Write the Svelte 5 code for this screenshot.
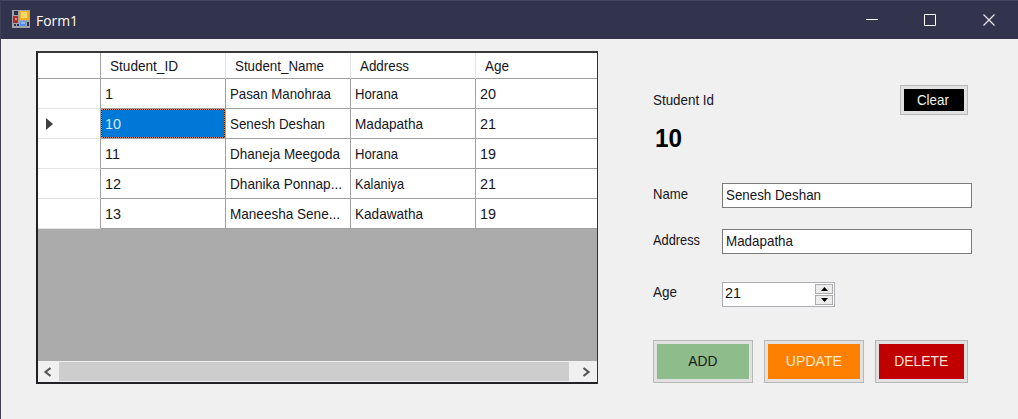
<script>
  const columns = [
    { name: 'Student_ID', w: 68 },
    { name: 'Student_Name', w: 89 },
    { name: 'Address', w: 49 },
    { name: 'Age', w: 24 }
  ];
  const rows = [
    [['1', 8], ['Pasan Manohraa', 101], ['Horana', 43], ['20', 16]],
    [['10', 16], ['Senesh Deshan', 95], ['Madapatha', 68], ['21', 16]],
    [['11', 15], ['Dhaneja Meegoda', 110], ['Horana', 43], ['19', 16]],
    [['12', 16], ['Dhanika Ponnap...', 112], ['Kalaniya', 49], ['21', 16]],
    [['13', 16], ['Maneesha Sene...', 110], ['Kadawatha', 68], ['19', 16]]
  ];
  const current = 1;

  // Condenses a label horizontally to the given width.
  function fit(node, width) {
    node.style.transform = `scaleX(${width / node.getBoundingClientRect().width})`;
  }
</script>

<div class="window">
  <header class="titlebar">
    <svg class="appicon" width="18" height="18" viewBox="0 0 18 18">
      <rect width="18" height="18" fill="#a3a4aa" />
      <rect x="2" y="1" width="4" height="4" fill="#2b2e52" />
      <rect x="1" y="6" width="5" height="7" fill="#b52a24" />
      <rect x="3" y="8" width="2" height="2" fill="#e98678" />
      <rect x="7.5" y="1" width="9.500" height="9" fill="#eeb020" />
      <rect x="9" y="2" width="6" height="6" fill="#fbd765" />
      <rect x="8" y="11.500" width="6" height="4.500" fill="#4d8ff0" />
      <rect x="9" y="12" width="4" height="2" fill="#8bbcff" />
      <rect x="2" y="14" width="2" height="2" fill="#2b2e52" />
      <rect x="5" y="14" width="2" height="2" fill="#2b2e52" />
      <rect x="15" y="12" width="2" height="4" fill="#2b2e52" />
    </svg>
    <span class="title"><span class="t" use:fit={42}>Form1</span></span>
    <div class="controls">
      <svg width="58" height="38" viewBox="0 0 58 38"><path d="M24 18.5h12" stroke="#fff" /></svg>
      <svg width="58" height="38" viewBox="0 0 58 38"><path d="M24.500 13.500h11v11h-11z" stroke="#fff" fill="none" /></svg>
      <svg width="58" height="38" viewBox="0 0 58 38"><path d="M25.500 13.500l11 11M36.500 13.500l-11 11" stroke="#e8e8ec" stroke-width="1.2" /></svg>
    </div>
  </header>

  <main>
    <section class="grid">
      <div class="row head">
        <div class="cell rh"></div>
        {#each columns as c}
          <div class="cell"><span class="t" use:fit={c.w}>{c.name}</span></div>
        {/each}
      </div>
      {#each rows as row, i}
        <div class="row">
          <div class="cell rh">
            {#if i === current}
              <svg width="7" height="12" viewBox="0 0 7 12"><path d="M0 0l7 6-7 6z" fill="#404040" /></svg>
            {/if}
          </div>
          {#each row as [text, w], j}
            <div class="cell" class:selected={i === current && j === 0}>
              <span class="t" use:fit={w}>{text}</span>
            </div>
          {/each}
        </div>
      {/each}
      <div class="scroll">
        <svg width="21" height="20" viewBox="0 0 21 20"><path d="M12.500 6l-5 4 5 4" fill="none" stroke="#555" stroke-width="2.200" /></svg>
        <div class="thumb"></div>
        <svg width="28" height="20" viewBox="0 0 28 20"><path d="M14.500 6l5 4-5 4" fill="none" stroke="#555" stroke-width="2.200" /></svg>
      </div>
    </section>

    <section class="form">
      <div class="top">
        <span class="label"><span class="t" use:fit={61}>Student Id</span></span>
        <button class="clear"><span class="t mid" use:fit={32}>Clear</span></button>
      </div>
      <div class="id"><span class="t" use:fit={27}>10</span></div>
      <div class="field name">
        <span class="label"><span class="t" use:fit={35}>Name</span></span>
        <div class="box"><span class="t" use:fit={95}>Senesh Deshan</span></div>
      </div>
      <div class="field address">
        <span class="label"><span class="t" use:fit={47}>Address</span></span>
        <div class="box"><span class="t" use:fit={67}>Madapatha</span></div>
      </div>
      <div class="field age">
        <span class="label"><span class="t" use:fit={24}>Age</span></span>
        <div class="box spin">
          <span class="t" use:fit={16}>21</span>
          <div class="arrows">
            <i><svg width="7" height="4" viewBox="0 0 7 4"><path d="M0 4l3.500-4L7 4z" /></svg></i>
            <i><svg width="7" height="4" viewBox="0 0 7 4"><path d="M0 0l3.500 4L7 0z" /></svg></i>
          </div>
        </div>
      </div>
      <div class="actions">
        <button class="add"><span class="t mid" use:fit={29}>ADD</span></button>
        <button class="update"><span class="t mid" use:fit={56}>UPDATE</span></button>
        <button class="delete"><span class="t mid" use:fit={54}>DELETE</span></button>
      </div>
    </section>
  </main>
</div>

<style>
  :global(body) { margin: 0; }
  .window {
    box-sizing: border-box;
    width: 1018px;
    height: 419px;
    background: #f0f0f0;
    border-left: 1px solid #3f4058;
    font: 15px/18px "Liberation Sans", Arial, sans-serif;
    color: #15151c;
    overflow: hidden;
  }
  .t { display: inline-block; white-space: nowrap; transform-origin: 0 50%; }
  .mid { transform-origin: 50% 50%; }
  .titlebar {
    box-sizing: border-box;
    height: 39px;
    background: #32334d;
    border-top: 1px solid #45465e;
    display: flex;
    align-items: center;
    padding-left: 11px;
    color: #fff;
  }
  .appicon { margin-bottom: 2px; }
  .title { margin: 0 0 1px 6px; font: 15px/20px "Open Sans", "Noto Sans", sans-serif; flex: 1; }
  .controls { display: flex; margin-right: 2px; }
  .controls svg { display: block; }
  main { display: flex; }
  .grid {
    box-sizing: border-box;
    width: 562px;
    height: 333px;
    margin: 12px 0 0 35px;
    border: 2px solid #222226;
    border-top-color: #38383b;
    border-right: 1px solid #333;
    background: #ababab;
    display: flex;
    flex-direction: column;
    overflow: hidden;
  }
  .row { display: grid; grid-template-columns: 63px 125px 125px 125px 121px; height: 30px; flex: none; }
  .row.head { height: 26px; }
  .cell {
    box-sizing: border-box;
    background: #fff;
    border-right: 1px solid #a0a0a0;
    border-bottom: 1px solid #a0a0a0;
    padding-left: 4px;
    display: flex;
    align-items: center;
    overflow: hidden;
  }
  .cell:last-child { border-right: 0; }
  .head .cell { padding-left: 9px; border-right-color: #e5e5e5; }
  .head .rh { border-right-color: #a0a0a0; }
  .row:not(.head) .rh { border-bottom-color: #e3e3e3; padding-left: 8px; }
  .selected { position: relative; background: #0078d7; color: #d8ebfc; }
  .selected::after {
    content: "";
    position: absolute;
    inset: 0;
    border: 1px dotted #e08030;
    background: linear-gradient(#222, #222) top / 100% 1px no-repeat border-box,
      linear-gradient(#222, #222) bottom / 100% 1px no-repeat border-box,
      linear-gradient(#222, #222) left / 1px 100% no-repeat border-box,
      linear-gradient(#222, #222) right / 1px 100% no-repeat border-box;
    background-origin: border-box;
  }
  .scroll { margin-top: auto; height: 21px; background: #f0f0f0; display: flex; align-items: center; }
  .thumb { flex: 1; height: 19px; background: #cdcdcd; }
  .form { width: 320px; margin: 46px 0 0 55px; }
  .top { display: flex; justify-content: space-between; width: 315px; height: 30px; }
  .top .label { padding-top: 6px; }
  button {
    box-sizing: border-box;
    font: inherit;
    padding: 0 1px 2px 0;
    border: 1px solid #b8b8b8;
    box-shadow: inset 0 0 0 3px #e1e1e1;
    display: flex;
    align-items: center;
    justify-content: center;
  }
  .clear { width: 68px; height: 30px; background: #000; color: #f5f5e8; padding: 0 3px 0 0; }
  .id { height: 68px; padding: 11px 0 0 2px; box-sizing: border-box; font-size: 25px; line-height: 24px; font-weight: bold; color: #000; }
  .field { display: flex; margin-left: -1px; }
  .field .label { width: 69px; padding: 2px 0 0 1px; }
  .box {
    box-sizing: border-box;
    width: 250px;
    height: 25px;
    background: #fff;
    border: 1px solid #7a7a7a;
    padding: 2px 0 0 3px;
  }
  .name { height: 46px; }
  .address { height: 53px; }
  .age { height: 58px; }
  .age .label { padding-top: 1px; }
  .box.spin { width: 113px; border-color: #abadb3; padding: 1px 1px 0 2px; display: flex; justify-content: space-between; }
  .arrows { display: flex; flex-direction: column; width: 18px; gap: 1px; }
  .arrows i {
    box-sizing: border-box;
    height: 10px;
    border: 1px solid #acacac;
    background: #ececec;
    display: flex;
    align-items: center;
    justify-content: center;
  }
  .actions { display: flex; gap: 11px; width: 330px; }
  .actions button { width: 100px; height: 43px; flex: none; }
  .actions .add { background: #8fbc8b; color: #182018; }
  .actions .update { background: #ff8000; color: #ffe8c8; }
  .actions .delete { width: 93px; background: #c00000; color: #ffe0d0; }
</style>
